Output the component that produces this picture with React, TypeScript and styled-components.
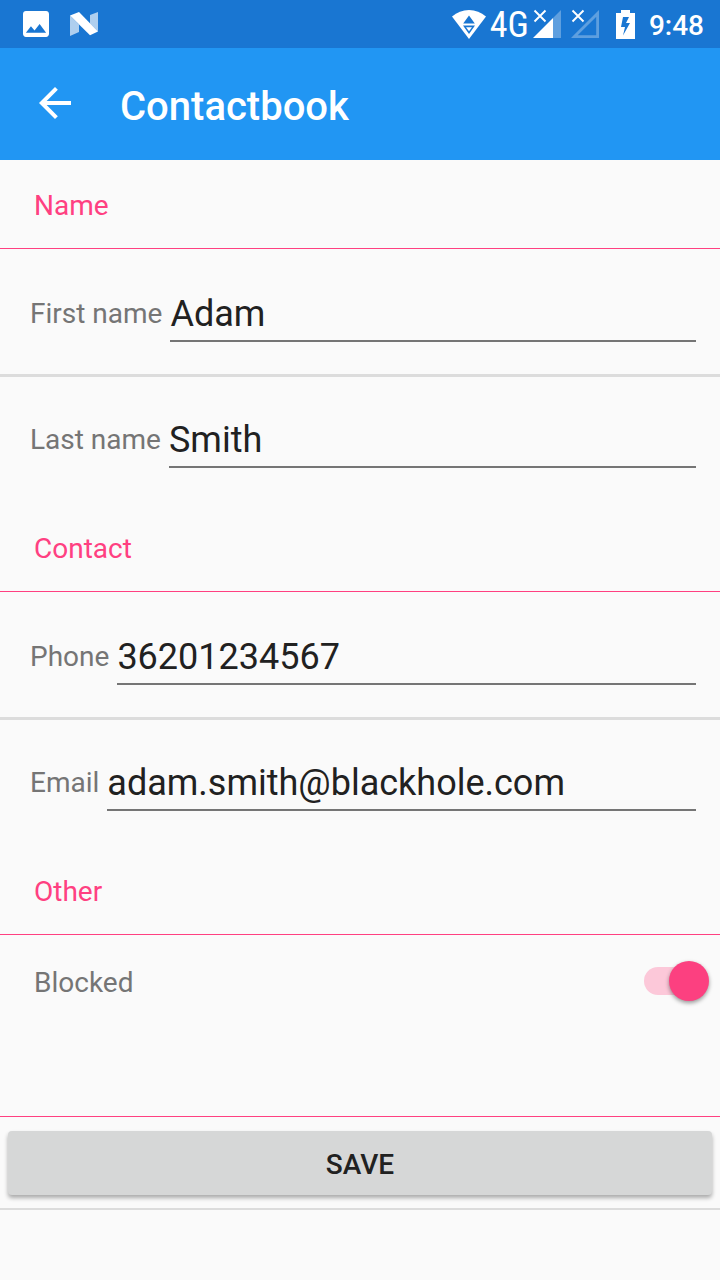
import React, { useId, useState } from "react";
import styled, { createGlobalStyle } from "styled-components";

const color = {
  primary: "#2196f3",
  primaryDark: "#1976d2",
  accent: "#ff4081",
  page: "#fafafa",
  divider: "#dcdcdc",
  label: "#757575",
  text: "#212121",
};

const GlobalStyle = createGlobalStyle`
  *, *::before, *::after { box-sizing: border-box; }
  body {
    margin: 0;
    background: ${color.page};
    color: ${color.text};
    font-family: Roboto, "Liberation Sans", sans-serif;
    font-size: 28px;
    line-height: 32px;
  }
`;

const Screen = styled.div`
  display: flex;
  flex-direction: column;
  min-height: 100vh;
`;

const StatusBar = styled.div`
  display: flex;
  align-items: center;
  justify-content: space-between;
  height: 48px;
  padding: 0 16px 0 23px;
  background: ${color.primaryDark};
  color: #fff;
`;

const StatusGroup = styled.div<{ $gap: number }>`
  display: flex;
  align-items: center;
  gap: ${({ $gap }) => $gap}px;

  svg {
    display: block;
    flex: none;
  }
`;

const NetworkType = styled.span`
  padding-top: 2px;
  font-family: "Roboto Condensed", Roboto, sans-serif;
  font-size: 36px;
  font-weight: 400;
  line-height: 42px;
`;

const Clock = styled.time`
  padding-top: 4px;
  font-weight: 500;
`;

const AppBar = styled.header`
  display: flex;
  align-items: center;
  gap: 41px;
  height: 112px;
  padding: 0 31px;
  background: ${color.primary};
  color: #fff;
`;

const BackButton = styled.button`
  display: flex;
  padding: 0 0 2px;
  border: 0;
  background: none;
  color: inherit;
`;

const Title = styled.h1`
  margin: 0;
  padding-top: 6px;
  font-size: 40px;
  line-height: 48px;
  font-weight: 500;
`;

const Section = styled.section`
  & + & {
    margin-top: 3px;
  }
`;

const SectionTitle = styled.h2`
  margin: 0;
  padding: 30px 34px 26px;
  border-bottom: 1px solid ${color.accent};
  color: ${color.accent};
  font-size: 28px;
  line-height: 32px;
  font-weight: 400;
`;

const FieldList = styled.div`
  padding-top: 2px;
`;

const FieldRow = styled.div`
  display: flex;
  align-items: flex-end;
  gap: 8px;
  padding: 42px 24px 32px 30px;

  & + & {
    border-top: 3px solid ${color.divider};
  }
`;

const FieldLabel = styled.label`
  flex: none;
  padding-bottom: 12px;
  color: ${color.label};
`;

const FieldInput = styled.input`
  flex: 1;
  min-width: 0;
  height: 49px;
  padding: 0 0 5px;
  border: 0;
  border-bottom: 2px solid ${color.label};
  border-radius: 0;
  outline: 0;
  background: none;
  color: ${color.text};
  font: inherit;
  font-size: 36px;
  line-height: 42px;
`;

const SwitchRow = styled.div`
  display: flex;
  align-items: center;
  justify-content: space-between;
  padding: 26px 11px 0 34px;
`;

const SwitchLabel = styled.label`
  padding-top: 4px;
  color: ${color.label};
`;

const Switch = styled.input`
  position: relative;
  flex: none;
  appearance: none;
  width: 65px;
  height: 40px;
  margin: 0;

  &::before {
    content: "";
    position: absolute;
    inset: 6px 5px 6px 0;
    border-radius: 14px;
    background: #bdbdbd;
  }

  &::after {
    content: "";
    position: absolute;
    top: 0;
    left: 0;
    width: 40px;
    height: 40px;
    border-radius: 50%;
    background: #f1f1f1;
    box-shadow: 0 2px 4px rgba(0, 0, 0, 0.4);
  }

  &:checked::before {
    background: #fcc8d9;
  }

  &:checked::after {
    left: 25px;
    background: #fc4080;
  }
`;

const Actions = styled.div`
  margin-top: 115px;
  padding: 14px 8px 13px;
  border-top: 1px solid ${color.accent};
  border-bottom: 2px solid ${color.divider};
`;

const SaveButton = styled.button`
  display: block;
  width: 100%;
  height: 64px;
  padding: 4px 0 0;
  border: 0;
  border-radius: 4px;
  background: #d6d7d7;
  box-shadow: 0 3px 4px rgba(0, 0, 0, 0.32);
  color: ${color.text};
  font: inherit;
  font-weight: 500;
  text-transform: uppercase;
`;

const PictureIcon = () => (
  <svg width="26" height="26" viewBox="3 3 18 18" fill="#fff" aria-hidden="true">
    <path d="M21 19V5c0-1.100-.9-2-2-2H5c-1.100 0-2 .9-2 2v14c0 1.100.9 2 2 2h14c1.100 0 2-.9 2-2zM8.500 13.500l2.500 3.010L14.500 12l4.500 6H5l3.500-4.500z" />
  </svg>
);

const NougatIcon = () => (
  <svg width="28" height="24" viewBox="0 0 28 24" fill="#fff" aria-hidden="true">
    <path opacity="0.65" d="M0 3.500l9 9V20l-9 4zM20 3l8-3v19.500l-8-8z" />
    <path d="M0 3.500L9 0l19 19.500-8 3.700z" />
  </svg>
);

const WifiIcon = () => (
  <svg width="34" height="29" viewBox="0 0 34 29" aria-hidden="true">
    <path fill="#fff" d="M17 29L0 6.500C5 2.200 10.500 0 17 0s12 2.200 17 6.500z" />
    <path fill={color.primaryDark} d="M17 5.500l5.800 8H11.200zM11 15.500h12L17 24z" />
    <path fill="#fff" d="M14 17.300h6L17 21.300z" />
  </svg>
);

const SignalIcon = ({ connected }: { connected: boolean }) => (
  <svg width="29" height="30" viewBox="0 0 29 30" fill="none" aria-hidden="true">
    {connected ? (
      <>
        <path fill="#fff" opacity="0.3" d="M20 9l8-8v28h-8z" />
        <path fill="#fff" d="M0 29L20 9v20z" />
      </>
    ) : (
      <path stroke="#fff" strokeWidth="2.800" opacity="0.3" d="M3.400 27.600L26.600 4.400v23.200z" />
    )}
    <path stroke="#fff" strokeWidth="1.900" d="M1.500 1.500l11 11M12.500 1.500l-11 11" />
  </svg>
);

const BatteryIcon = () => (
  <svg width="19" height="29" viewBox="0 0 19 29" fill="#fff" aria-hidden="true">
    <path
      fillRule="evenodd"
      d="M5 0h9v3h5v26H0V3h5zM7 7L5 17h4L7 25.500 14 13h-4L13 7z"
    />
  </svg>
);

const BackIcon = () => (
  <svg width="48" height="48" viewBox="0 0 24 24" fill="currentColor" aria-hidden="true">
    <path d="M20 11H7.830l5.590-5.590L12 4l-8 8 8 8 1.410-1.410L7.830 13H20z" />
  </svg>
);

type FieldProps = { label: string; initial: string; type?: string };

const Field = ({ label, initial, type = "text" }: FieldProps) => {
  const id = useId();
  const [value, setValue] = useState(initial);
  return (
    <FieldRow>
      <FieldLabel htmlFor={id}>{label}</FieldLabel>
      <FieldInput
        id={id}
        type={type}
        value={value}
        spellCheck={false}
        onChange={(e) => setValue(e.target.value)}
      />
    </FieldRow>
  );
};

export default function App() {
  const [blocked, setBlocked] = useState(true);

  return (
    <Screen>
      <GlobalStyle />
      <StatusBar>
        <StatusGroup $gap={21}>
          <PictureIcon />
          <NougatIcon />
        </StatusGroup>
        <StatusGroup $gap={16}>
          <StatusGroup $gap={9}>
            <StatusGroup $gap={4}>
              <WifiIcon />
              <NetworkType>4G</NetworkType>
              <SignalIcon connected />
            </StatusGroup>
            <SignalIcon connected={false} />
          </StatusGroup>
          <StatusGroup $gap={14}>
            <BatteryIcon />
            <Clock>9:48</Clock>
          </StatusGroup>
        </StatusGroup>
      </StatusBar>
      <AppBar>
        <BackButton type="button" aria-label="Back">
          <BackIcon />
        </BackButton>
        <Title>Contactbook</Title>
      </AppBar>
      <form onSubmit={(e) => e.preventDefault()}>
        <Section>
          <SectionTitle>Name</SectionTitle>
          <FieldList>
            <Field label="First name" initial="Adam" />
            <Field label="Last name" initial="Smith" />
          </FieldList>
        </Section>
        <Section>
          <SectionTitle>Contact</SectionTitle>
          <FieldList>
            <Field label="Phone" initial="36201234567" type="tel" />
            <Field label="Email" initial="adam.smith@blackhole.com" type="email" />
          </FieldList>
        </Section>
        <Section>
          <SectionTitle>Other</SectionTitle>
          <SwitchRow>
            <SwitchLabel htmlFor="blocked">Blocked</SwitchLabel>
            <Switch
              id="blocked"
              type="checkbox"
              role="switch"
              checked={blocked}
              onChange={(e) => setBlocked(e.target.checked)}
            />
          </SwitchRow>
        </Section>
        <Actions>
          <SaveButton type="submit">Save</SaveButton>
        </Actions>
      </form>
    </Screen>
  );
}
